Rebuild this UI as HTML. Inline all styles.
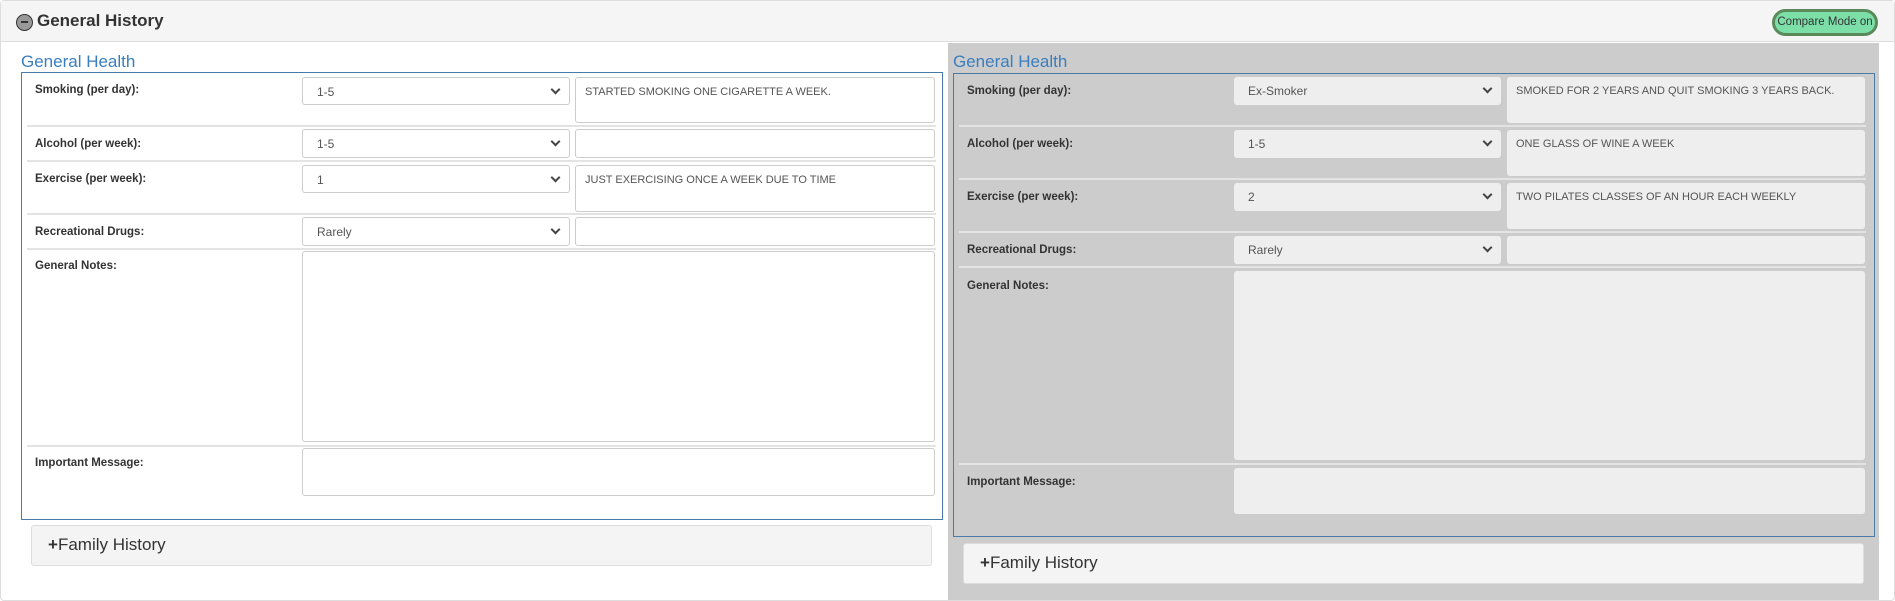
<!DOCTYPE html>
<html><head><meta charset="utf-8"><style>
*{box-sizing:border-box;margin:0;padding:0}
body{width:1895px;height:601px;position:relative;background:#fff;font-family:"Liberation Sans",sans-serif;overflow:hidden}
.a{position:absolute}
.lbl{position:absolute;font-size:11.5px;font-weight:bold;color:#333}
.sel{position:absolute;border:1px solid #ccc;border-radius:3px;background:#fff;font-size:12px;color:#555;padding:7px 0 0 14px}
.sel::after{content:"";position:absolute;right:10px;top:8px;width:5px;height:5px;border-right:2px solid #444;border-bottom:2px solid #444;transform:rotate(45deg)}
.ta{position:absolute;border:1px solid #ccc;border-radius:3px;background:#fff;font-size:11px;color:#555;padding:8px 0 0 9px}
.r .sel,.r .ta{border:none;background:#eee}
.sep{position:absolute;height:2px;background:#e3e3e3}
.gh{position:absolute;font-size:17px;color:#3a7ebf}
</style></head><body>
<div class="a" style="left:0;top:0;width:1895px;height:601px;border:1px solid #ddd;border-radius:4px"></div>
<div class="a" style="left:1px;top:1px;width:1893px;height:41px;background:#f5f5f5;border-bottom:1px solid #ddd"></div>
<div class="a" style="left:16px;top:14px;width:17px;height:17px;border-radius:50%;background:#999;border:1.5px solid #333"></div>
<div class="a" style="left:21px;top:21px;width:7px;height:2px;background:#333"></div>
<div class="a" style="left:37px;top:11px;font-size:17px;font-weight:bold;color:#333">General History</div>
<div class="a" style="left:1772px;top:9px;width:106px;height:27px;border-radius:14px;background:#7ddfa8;border:3px solid #5a8a5a;font-size:11.5px;color:#333;text-align:center;line-height:21px;white-space:nowrap;padding:0">Compare Mode on</div>

<div class="a" style="left:948px;top:43px;width:931px;height:557px;background:#ccc"></div>

<div class="gh" style="left:21px;top:52px">General Health</div>
<div class="a" style="left:21px;top:72px;width:922px;height:448px;border:1px solid #4a7aa8"></div>
<div class="l">
<div class="lbl" style="left:35px;top:84px">Smoking (per day):</div>
<div class="sel" style="left:302px;top:77px;width:268px;height:28px">1-5</div>
<div class="ta" style="left:575px;top:77px;width:360px;height:46px">STARTED SMOKING ONE CIGARETTE A WEEK.</div>
<div class="sep" style="left:27px;top:125px;width:909px"></div>
<div class="lbl" style="left:35px;top:138px">Alcohol (per week):</div>
<div class="sel" style="left:302px;top:129px;width:268px;height:29px">1-5</div>
<div class="ta" style="left:575px;top:129px;width:360px;height:29px"></div>
<div class="sep" style="left:27px;top:160px;width:909px"></div>
<div class="lbl" style="left:35px;top:173px">Exercise (per week):</div>
<div class="sel" style="left:302px;top:165px;width:268px;height:28px">1</div>
<div class="ta" style="left:575px;top:165px;width:360px;height:47px">JUST EXERCISING ONCE A WEEK DUE TO TIME</div>
<div class="sep" style="left:27px;top:213px;width:909px"></div>
<div class="lbl" style="left:35px;top:226px">Recreational Drugs:</div>
<div class="sel" style="left:302px;top:217px;width:268px;height:29px">Rarely</div>
<div class="ta" style="left:575px;top:217px;width:360px;height:29px"></div>
<div class="sep" style="left:27px;top:248px;width:909px"></div>
<div class="lbl" style="left:35px;top:260px">General Notes:</div>
<div class="ta" style="left:302px;top:251px;width:633px;height:191px"></div>
<div class="sep" style="left:27px;top:445px;width:909px"></div>
<div class="lbl" style="left:35px;top:457px">Important Message:</div>
<div class="ta" style="left:302px;top:448px;width:633px;height:48px"></div>
</div>
<div class="a" style="left:31px;top:525px;width:901px;height:41px;background:#f4f4f4;border:1px solid #ddd;border-radius:3px;font-size:17px;color:#333;padding:9px 0 0 16px"><b>+</b>Family History</div>

<div class="r">
<div class="gh" style="left:953px;top:52px">General Health</div>
<div class="a" style="left:953px;top:73px;width:922px;height:464px;border:1px solid #4a7aa8"></div>
<div class="lbl" style="left:967px;top:85px">Smoking (per day):</div>
<div class="sel" style="left:1234px;top:77px;width:267px;height:28px">Ex-Smoker</div>
<div class="ta" style="left:1507px;top:77px;width:358px;height:46px">SMOKED FOR 2 YEARS AND QUIT SMOKING 3 YEARS BACK.</div>
<div class="sep" style="left:959px;top:125px;width:907px"></div>
<div class="lbl" style="left:967px;top:138px">Alcohol (per week):</div>
<div class="sel" style="left:1234px;top:130px;width:267px;height:28px">1-5</div>
<div class="ta" style="left:1507px;top:130px;width:358px;height:46px">ONE GLASS OF WINE A WEEK</div>
<div class="sep" style="left:959px;top:178px;width:907px"></div>
<div class="lbl" style="left:967px;top:191px">Exercise (per week):</div>
<div class="sel" style="left:1234px;top:183px;width:267px;height:28px">2</div>
<div class="ta" style="left:1507px;top:183px;width:358px;height:46px">TWO PILATES CLASSES OF AN HOUR EACH WEEKLY</div>
<div class="sep" style="left:959px;top:231px;width:907px"></div>
<div class="lbl" style="left:967px;top:244px">Recreational Drugs:</div>
<div class="sel" style="left:1234px;top:236px;width:267px;height:28px">Rarely</div>
<div class="ta" style="left:1507px;top:236px;width:358px;height:28px"></div>
<div class="sep" style="left:959px;top:266px;width:907px"></div>
<div class="lbl" style="left:967px;top:280px">General Notes:</div>
<div class="ta" style="left:1234px;top:271px;width:631px;height:189px"></div>
<div class="sep" style="left:959px;top:463px;width:907px"></div>
<div class="lbl" style="left:967px;top:476px">Important Message:</div>
<div class="ta" style="left:1234px;top:468px;width:631px;height:46px"></div>
<div class="a" style="left:963px;top:543px;width:901px;height:41px;background:#f4f4f4;border:1px solid #ddd;border-radius:3px;font-size:17px;color:#333;padding:9px 0 0 16px"><b>+</b>Family History</div>
</div>
</body></html>
